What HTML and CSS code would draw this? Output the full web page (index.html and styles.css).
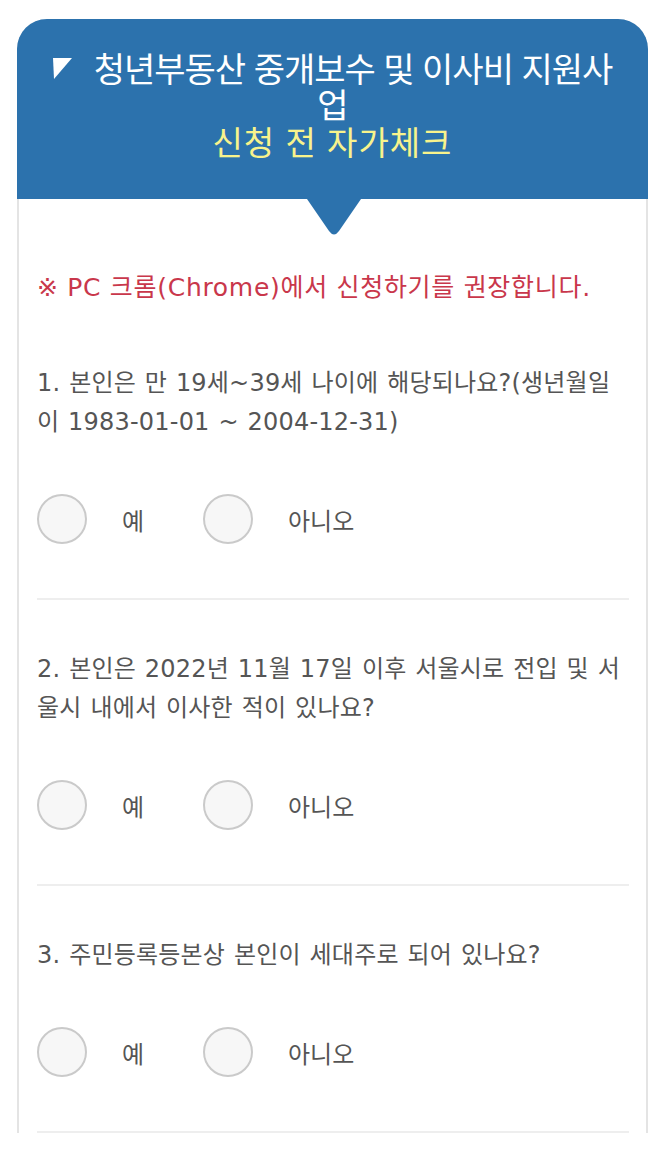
FILE: index.html
```html
<!DOCTYPE html>
<html lang="ko">
<head>
<meta charset="utf-8">
<link rel="stylesheet" href="styles.css">
</head>
<body>
<div class="card">
  <div class="header">
    <h1 class="title"><svg class="flag" width="19" height="21" viewBox="0 0 19 21"><polygon points="0,0 19,0 1,21" fill="#fff"/></svg>청년부동산 중개보수 및 이사비 지원사업</h1>
    <div class="subtitle">신청 전 자가체크</div>
    <svg class="pointer" width="54" height="37" viewBox="0 0 54 37"><path d="M0 0 H54 L32 32 Q27 39 22 32 Z" fill="#2c72ad"/></svg>
  </div>
  <div class="body">
    <p class="notice">※ PC 크롬(Chrome)에서 신청하기를 권장합니다.</p>
    <div class="question">
      <p class="q-text">1. 본인은 만 19세~39세 나이에 해당되나요?(생년월일이 1983-01-01 ~ 2004-12-31)</p>
      <div class="options">
        <label class="option"><span class="radio"></span><span class="opt-label">예</span></label>
        <label class="option"><span class="radio"></span><span class="opt-label">아니오</span></label>
      </div>
    </div>
    <div class="question">
      <p class="q-text">2. 본인은 2022년 11월 17일 이후 서울시로 전입 및 서울시 내에서 이사한 적이 있나요?</p>
      <div class="options">
        <label class="option"><span class="radio"></span><span class="opt-label">예</span></label>
        <label class="option"><span class="radio"></span><span class="opt-label">아니오</span></label>
      </div>
    </div>
    <div class="question">
      <p class="q-text">3. 주민등록등본상 본인이 세대주로 되어 있나요?</p>
      <div class="options">
        <label class="option"><span class="radio"></span><span class="opt-label">예</span></label>
        <label class="option"><span class="radio"></span><span class="opt-label">아니오</span></label>
      </div>
    </div>
  </div>
</div>
</body>
</html>
```
FILE: styles.css
```css
html, body {
  margin: 0;
  padding: 0;
  background: #fff;
}
body {
  font-family: "DejaVu Sans", "Noto Sans CJK KR", sans-serif;
  color: #555;
}
.card {
  margin: 19px 18px 0 17px;
  width: 631px;
  box-sizing: border-box;
  border-left: 2px solid #e4e4e4;
  border-right: 2px solid #e4e4e4;
  border-radius: 30px 30px 0 0;
}
.header {
  position: relative;
  background: #2c72ad;
  border-radius: 30px 30px 0 0;
  margin: 0 -2px;
  height: 180px;
  box-sizing: border-box;
  padding: 31px 30px 0;
  text-align: center;
}
.title {
  margin: 0;
  font-family: "Noto Sans CJK KR", sans-serif;
  font-weight: 400;
  font-size: 34px;
  line-height: 36px;
  letter-spacing: -1px;
  color: #fff;
}
.flag {
  display: inline-block;
  vertical-align: 3px;
  margin-right: 22px;
}
.subtitle {
  margin-top: 1px;
  font-family: "Noto Sans CJK KR", sans-serif;
  font-size: 33px;
  line-height: 36px;
  letter-spacing: 1px;
  color: #f8f38c;
}
.pointer {
  position: absolute;
  left: 290px;
  top: 180px;
}
.body {
  padding: 0 17px 0 18px;
}
.notice {
  margin: 70px 0 7px;
  font-size: 25px;
  line-height: 38px;
  color: #c9374b;
  letter-spacing: 0.7px;
}
.question {
  padding: 50px 0 54px;
  border-bottom: 2px solid #eeeeee;
}
.q-text {
  margin: 0;
  font-size: 24px;
  line-height: 39px;
  letter-spacing: 0.2px;
  word-spacing: 1px;
  color: #555;
}
.options {
  display: flex;
  margin-top: 52px;
}
.option {
  display: flex;
  align-items: center;
  width: 166px;
}
.radio {
  width: 50px;
  height: 50px;
  box-sizing: border-box;
  border-radius: 50%;
  border: 2px solid #cacaca;
  background: #f7f7f7;
  flex: none;
}
.opt-label {
  margin-left: 35px;
  font-size: 24px;
  color: #555;
}
```
